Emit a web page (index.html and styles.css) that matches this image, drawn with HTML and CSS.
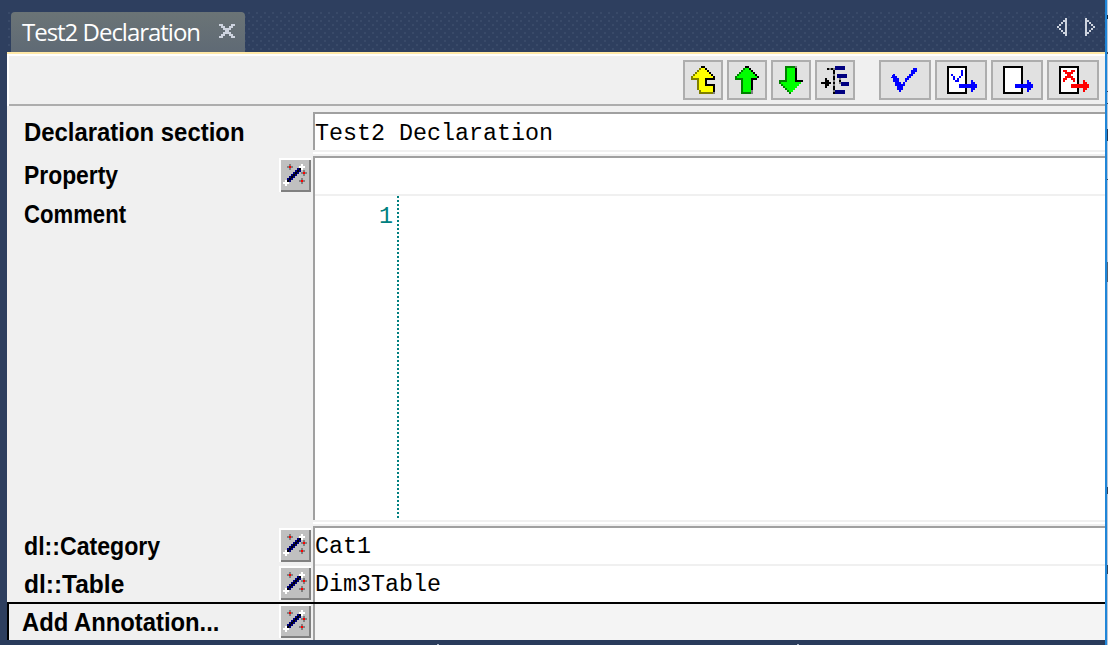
FILE: index.html
```html
<!DOCTYPE html>
<html lang="en">
<head>
<meta charset="utf-8">
<title>Test2 Declaration</title>
<link rel="stylesheet" href="styles.css">
</head>
<body>
<svg class="defs" width="0" height="0">
  <symbol id="wand" viewBox="0 0 16 17">
    <path fill="#808080" d="M5 3h1v1h1v1h-1v1h-1v-1h-1v-1h1zM12 6h1v1h1v1h-1v1h-1v-1h-1v-1h1zM11 10h1v1h1v1h-1v1h-1v-1h-1v-1h1z"/>
    <path fill="#f00" d="M5 4h1v1h-1zM12 7h1v1h-1zM11 11h1v1h-1z"/>
    <path fill="#fff" d="M11 3h1v1h1v1h-1v1h-1v-1h-1v-1h1zM3 11h1v1h1v1h-1v1h-1v-1h-1v-1h1z"/>
    <path fill="#000080" d="M9 5h2v2h-1v1h-1v1h-1v1h-1v1h-1v1h-2v-2h1v-1h1v-1h1v-1h1v-1h1z"/>
    <path fill="#000" d="M10 5h1v1h-1zM9 6h1v1h-1zM8 7h1v1h-1zM7 8h1v1h-1zM6 9h1v1h-1zM5 10h1v1h-1zM4 11h1v1h-1z"/>
  </symbol>
  <symbol id="page" viewBox="0 0 26 20">
    <path fill="#000" d="M6 3h10v14h-10z"/><path fill="#fff" d="M7 4h8v12h-8z"/>
  </symbol>
  <symbol id="exit" viewBox="0 0 26 20">
    <path fill="currentColor" d="M12 12h6v-2h1v1h1v1h1v2h-1v1h-1v1h-1v-2h-6z"/>
  </symbol>
</svg>
<div class="window">
  <div class="main">
    <header class="tabs">
      <div class="tab"><span class="tab-title">Test2 Declaration</span>
        <svg class="close" viewBox="0 0 8 7"><path d="M0 0h2v1h1v1h2v-1h1v-1h2v1h-1v1h-1v1h-1v1h1v1h1v1h1v1h-2v-1h-1v-1h-2v1h-1v1h-2v-1h1v-1h1v-1h1v-1h-1v-1h-1v-1h-1z"/></svg>
      </div>
      <div class="tab-nav">
        <svg viewBox="0 0 5 9"><path d="M4 0h1v9h-1v-1h-1v-1h-1v-1h-1v-1h-1v-1h1v-1h1v-1h1v-1h1zM4 2h-1v1h-1v1h-1v1h1v1h1v1h1z"/></svg>
        <svg viewBox="0 0 5 9"><path d="M1 0h-1v9h1v-1h1v-1h1v-1h1v-1h1v-1h-1v-1h-1v-1h-1v-1h-1zM1 2h1v1h1v1h1v1h-1v1h-1v1h-1z"/></svg>
      </div>
    </header>
    <div class="toolbar">
      <div class="group">
        <button class="tool"><svg viewBox="0 0 20 20">
          <path fill="#000" d="M9 3h2v1h1v1h1v1h1v1h1v1h1v2h-4v2h4v4h-5v-8h-2z"/>
          <path fill="#808000" d="M8 4h1v1h-1zM7 5h1v1h-1zM6 6h1v1h-1zM5 7h1v1h-1zM4 8h4v2h-4zM7 10h1v5h-1zM8 15h1v1h6v1h-7z"/>
          <path fill="#ff0" d="M9 4h2v1h1v1h1v1h1v1h1v1h-4v4h4v3h-6v-1h-1v-6h-3v-1h1v-1h1v-1h1v-1h1z"/>
          <path fill="#808080" d="M15 16h1v1h-1z"/>
        </svg></button>
        <button class="tool"><svg viewBox="0 0 20 20">
          <path fill="#000" d="M9 3h2v1h1v1h1v1h1v1h1v1h1v1h-1v1h-2v6h-1v1h-2z"/>
          <path fill="#008000" d="M9 4h-1v1h-1v1h-1v1h-1v1h-1v2h3v7h5v-1h-3z"/>
          <path fill="#808080" d="M12 15h1v2h-1z"/>
          <path fill="#0f0" d="M9 4h2v1h1v1h1v1h1v1h1v1h-3v7h-4v-7h-3v-1h1v-1h1v-1h1v-1h1z"/>
        </svg></button>
        <button class="tool"><svg viewBox="0 0 20 20">
          <path fill="#000" d="M12 3h1v7h3v1h-1v1h-1v1h-1v1h-1v1h-1v1h-1v1h-1v-2z"/>
          <path fill="#008000" d="M7 3h5v1h-4v7h-3v1h1v1h1v1h1v1h1v1h1v1h-1v-1h-1v-1h-1v-1h-1v-1h-1v-1h-1v-2h3z"/>
          <path fill="#808080" d="M12 3h1v1h-1z"/>
          <path fill="#0f0" d="M8 4h4v7h3v1h-1v1h-1v1h-1v1h-1v1h-2v-1h-1v-1h-1v-1h-1v-1h-1v-1h3z"/>
        </svg></button>
        <button class="tool"><svg viewBox="0 0 20 20">
          <path fill="#808080" d="M9 4h1v12h-1zM7 4h2v1h-2zM12 9h1v3h-1z"/>
          <path fill="#000" d="M3 11h2v-2h1v1h1v1h1v1h-1v1h-1v1h-1v-2h-2zM6 4h1v1h-1zM8 4h1v1h-1zM9 5h1v2h-1zM9 8h1v2h-1zM9 11h1v1h-1zM9 13h1v2h-1zM9 16h1v1h-1zM12 10h1v1h-1z"/>
          <path fill="#000080" d="M10 3h5v2h-5zM11 7h5v2h-5zM13 11h4v2h-4zM10 15h5v2h-5z"/>
        </svg></button>
      </div>
      <div class="group">
        <button class="tool wide"><svg viewBox="0 0 26 20"><path fill="#00f" d="M7 7h1v1h1v1h1v2h1v1h1v-1h1v-2h1v-1h1v-1h1v-2h1v-1h2v2h-1v1h-1v1h-1v1h-1v1h-1v1h-1v2h-1v2h-1v1h-1v-1h-1v-2h-1v-2h-1v-2h-1z"/></svg></button>
        <button class="tool wide blue"><svg viewBox="0 0 26 20"><use href="#page"/><path fill="#00f" d="M8 7h1v1h1v2h1v-1h1v-1h1v-3h1v3h-1v1h-1v2h-2v-1h-1v-2h-1z"/><use href="#exit"/></svg></button>
        <button class="tool wide blue"><svg viewBox="0 0 26 20"><use href="#page"/><use href="#exit"/></svg></button>
        <button class="tool wide red"><svg viewBox="0 0 26 20"><use href="#page"/><path fill="#f00" d="M8 5h2v1h2v-1h2v1h-1v1h-1v1h1v1h1v2h-1v-1h-1v-1h-2v1h-1v1h-1v-2h1v-1h1v-1h-1v-1h-1z"/><use href="#exit"/></svg></button>
      </div>
    </div>
    <div class="form">
      <div class="row r-name"><div class="label l1"><span>Declaration section</span></div><div class="field">Test2 Declaration</div></div>
      <div class="row r-prop"><div class="label l2"><span>Property</span><button class="wand"><svg><use href="#wand"/></svg></button></div><div class="field"></div></div>
      <div class="row r-comment"><div class="label l3"><span>Comment</span></div><div class="field"><div class="gutter">1</div></div></div>
      <div class="row r-cat"><div class="label l4"><span>dl::Category</span><button class="wand"><svg><use href="#wand"/></svg></button></div><div class="field">Cat1</div></div>
      <div class="row r-table"><div class="label l5"><span>dl::Table</span><button class="wand"><svg><use href="#wand"/></svg></button></div><div class="field">Dim3Table</div></div>
      <div class="row r-add"><div class="label l6"><span>Add Annotation...</span><button class="wand"><svg><use href="#wand"/></svg></button></div><div class="field"></div></div>
    </div>
    <footer class="bottom"></footer>
  </div>
  <div class="edge"></div>
  <div class="behind"></div>
</div>
</body>
</html>
```
FILE: styles.css
```css
* { box-sizing: border-box; }
body { margin: 0; overflow: hidden; }
.defs { position: absolute; }
svg { display: block; shape-rendering: crispEdges; }
button { padding: 0; border: 0; }
.window { display: flex; width: 1108px; height: 645px; background: #2e3f5f; }
.main { width: 1105px; padding-left: 7px; }
.edge { width: 2px; background: #1f86d8; }
.behind { width: 1px; background: linear-gradient(#b8c6da 0 15px, #172338 15px 19px, #b8c6da 19px 52px, #34445c 52px 54px, #b8c6da 54px 91px, #34445c 91px 92px, #b8c6da 92px 103px, #34445c 103px 104px, #b8c6da 104px 129px, #263b59 129px 141px, #b8c6da 141px 179px, #34445c 179px 180px, #b8c6da 180px 262px, #536174 262px 282px, #b8c6da 282px 487px, #34445c 487px 494px, #b8c6da 494px 565px, #34445c 565px 574px, #b8c6da 574px); }

.tabs { display: flex; justify-content: space-between; height: 54px; padding: 12px 10px 0 4px; border-bottom: 2px solid #ffe8a6;
  background: linear-gradient(#2e3f5f, #2e3f5f) 0 0 / 100% 12px no-repeat, radial-gradient(circle at 1px 1px, #394a69 1.3px, transparent 1.4px) 1px 12px / 8px 8px, radial-gradient(circle at 1px 1px, #394a69 1.3px, transparent 1.4px) 5px 16px / 8px 8px; }
.tab { display: flex; align-items: flex-start; justify-content: space-between; width: 234px; height: 40px; padding: 0 10px 0 11px; border-radius: 4px 4px 0 0; background: linear-gradient(#6b7476, #5f6a75); }
.tab-title { font: 24px/40px "Open Sans", "Noto Sans", sans-serif; color: #fff; white-space: nowrap; letter-spacing: -1.02px; }
.close { width: 16px; height: 14px; margin-top: 12px; fill: #ced4df; }
.tab-nav { display: flex; gap: 18px; padding-top: 6px; }
.tab-nav svg { width: 10px; height: 18px; fill: #ced4df; fill-rule: evenodd; }

.toolbar { display: flex; justify-content: flex-end; gap: 24px; height: 52px; padding: 4px 6px 0 0; border-top: 2px solid #fff; border-left: 2px solid #fff; background: linear-gradient(#adadad, #adadad) bottom / 100% 2px no-repeat #f0f0f0; }
.group { display: flex; gap: 4px; }
.tool { width: 40px; height: 40px; background: #e1e1e1; box-shadow: inset 0 0 0 2px #adadad; }
.tool.wide { width: 52px; }
.tool svg { width: 100%; height: 40px; }
.blue { color: #00f; }
.red { color: #f00; }

.form { height: 534px; padding-top: 6px; background: #f0f0f0; }
.row { display: flex; }
.label { display: flex; justify-content: space-between; width: 306px; padding: 0 2px 0 17px; font: bold 25px/34px "Liberation Sans", Arial, sans-serif; color: #000; white-space: nowrap; }
.label span { transform-origin: 0 50%; }
.l1 span { transform: scaleX(.956); }
.l2 span { transform: scaleX(.915); }
.l3 span { transform: scaleX(.885); }
.l4 span { transform: scaleX(.925); }
.l5 span { transform: scaleX(.98); }
.l6 span { transform: scaleX(.952); }
.wand { width: 32px; height: 34px; background: #c0c0c0; box-shadow: inset 2px 2px #fff, inset -2px -2px #808080; }
.wand svg { width: 32px; height: 34px; }
.field { flex: 1; border-left: 2px solid #a0a0a0; background: #fff; font: 23.33px/37px "Liberation Mono", "Courier New", monospace; color: #000; }
.r-name { height: 44px; background: linear-gradient(#fff, #fff) 306px 40px / 100% 2px no-repeat; }
.r-name .label { padding-top: 3px; }
.r-name .field { height: 38px; border-top: 2px solid #a0a0a0; line-height: 40px; }
.r-prop { height: 38px; }
.r-prop .field, .r-cat .field { border-top: 2px solid #a0a0a0; }
.r-prop .label, .r-cat .label { padding-top: 2px; }
.r-cat .field { line-height: 39px; }
.r-comment { height: 332px; background: linear-gradient(#fff, #fff) 306px 328px / 100% 2px no-repeat; }
.r-comment .label { padding-top: 3px; }
.r-comment .field { height: 326px; }
.r-comment .field, .r-table .field { background: linear-gradient(#f0f0f0, #f0f0f0) 0 0 / 100% 2px no-repeat #fff; }
.gutter { width: 84px; height: 324px; padding: 5px 6px 0 0; text-align: right; color: #008080; background: repeating-linear-gradient(#008080 0 2px, transparent 2px 4px) right 2px / 2px 322px no-repeat; }
.r-cat { height: 38px; }
.r-table { height: 38px; }
.r-table .label { padding-top: 2px; }
.r-table .field { padding-top: 3px; }
.r-add { height: 38px; border-top: 2px solid #000; }
.r-add .label { padding-left: 13px; border-left: 2px solid #000; }
.l4 span, .l5 span, .l6 span { padding-top: 1px; }
.r-add .field { background: #f4f4f4; }
.bottom { height: 5px; margin-left: -7px; background: linear-gradient(#aeb9cb, #aeb9cb) 437px 4px / 2px 1px no-repeat, linear-gradient(#aeb9cb, #aeb9cb) 797px 4px / 2px 1px no-repeat, #293b5b; }
```
